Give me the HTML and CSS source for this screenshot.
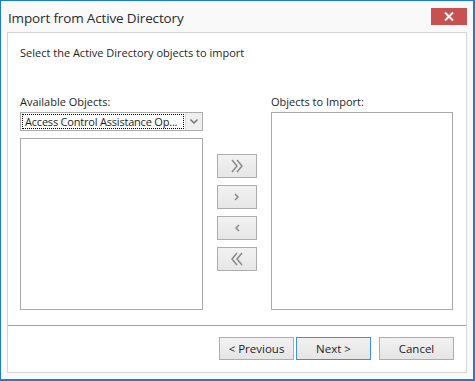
FILE: index.html
```html
<!DOCTYPE html>
<html lang="en">
<head>
    <meta charset="UTF-8">
    <title>Import from Active Directory</title>
    <link rel="stylesheet" href="styles.css">
</head>
<body>
    <div class="window">
        <div class="title-bar">
            <span class="title">Import from Active Directory</span>
            <button class="close-button" aria-label="Close">
                <svg width="10" height="9" viewBox="0 0 10 9"><path d="M1 0.5 L9 8.5 M9 0.5 L1 8.5" stroke="#fff" stroke-width="2"/></svg>
            </button>
        </div>
        <div class="panel">
            <div class="panel-body">
                <p class="intro">Select the Active Directory objects to import</p>
                <div class="columns">
                    <div class="column left">
                        <label class="field-label">Available Objects:</label>
                        <div class="combo">
                            <span class="combo-text">Access Control Assistance Op...</span>
                            <span class="combo-button">
                                <svg width="8" height="5" viewBox="0 0 8 5"><path d="M0.5 0.5 L4 4 L7.5 0.5" fill="none" stroke="#6d6d6d" stroke-width="1.4"/></svg>
                            </span>
                        </div>
                        <div class="list-box available"></div>
                    </div>
                    <div class="column middle">
                        <button class="move-button" aria-label="Add all">
                            <svg width="12" height="14" viewBox="0 0 12 14"><path d="M1 1 L6 7 L1 13 M6 1 L11 7 L6 13" fill="none" stroke="#8a8a8a" stroke-width="1.5"/></svg>
                        </button>
                        <button class="move-button" aria-label="Add">
                            <svg width="6" height="8" viewBox="0 0 6 8"><path d="M1 1 L4 4 L1 7" fill="none" stroke="#8a8a8a" stroke-width="1.5"/></svg>
                        </button>
                        <button class="move-button" aria-label="Remove">
                            <svg width="6" height="8" viewBox="0 0 6 8"><path d="M5 1 L2 4 L5 7" fill="none" stroke="#8a8a8a" stroke-width="1.5"/></svg>
                        </button>
                        <button class="move-button" aria-label="Remove all">
                            <svg width="12" height="14" viewBox="0 0 12 14"><path d="M11 1 L6 7 L11 13 M6 1 L1 7 L6 13" fill="none" stroke="#8a8a8a" stroke-width="1.5"/></svg>
                        </button>
                    </div>
                    <div class="column right">
                        <label class="field-label">Objects to Import:</label>
                        <div class="list-box selected"></div>
                    </div>
                </div>
            </div>
            <div class="panel-footer">
                <button class="button">&lt; Previous</button>
                <button class="button default">Next &gt;</button>
                <button class="button cancel">Cancel</button>
            </div>
        </div>
    </div>
</body>
</html>
```

FILE: styles.css
```css
body {
    margin: 0;
    padding: 0;
    font-family: "Open Sans", "Noto Sans", Arial, sans-serif;
    font-size: 11px;
    color: #1e1e1e;
    background-color: #ffffff;
}
.window {
    width: 475px;
    height: 381px;
    box-sizing: border-box;
    border: 1px solid #1a7fd4;
    border-right-width: 2px;
    border-bottom-width: 2px;
    background-color: #f9f9f9;
    display: flex;
    flex-direction: column;
}
.title-bar {
    height: 31px;
    display: flex;
    justify-content: space-between;
    align-items: flex-start;
    flex-shrink: 0;
}
.title {
    font-size: 13.5px;
    letter-spacing: -0.15px;
    color: #2b2b2b;
    padding-left: 7px;
    line-height: 20px;
    margin-top: 7px;
}
.close-button {
    width: 36px;
    min-width: 36px;
    height: 17px;
    flex-shrink: 0;
    margin-top: 7px;
    margin-right: 6px;
    border: none;
    padding: 0;
    background-color: #c75050;
    display: flex;
    align-items: center;
    justify-content: center;
}
.panel {
    margin: 0 6px 6px 6px;
    flex: 1;
    background-color: #ffffff;
    border: 1px solid #d6d6d6;
    display: flex;
    flex-direction: column;
}
.panel-body {
    height: 292px;
    padding: 12px 13px 0 12px;
    box-sizing: border-box;
}
.intro {
    margin: 0;
    line-height: 16px;
}
.columns {
    display: flex;
    margin-top: 33px;
}
.column {
    display: flex;
    flex-direction: column;
}
.column.left {
    width: 183px;
}
.column.right {
    width: 182px;
}
.field-label {
    line-height: 16px;
    margin-bottom: 2px;
}
.combo {
    height: 19px;
    box-sizing: border-box;
    border: 1px solid #acacac;
    display: flex;
    background-color: #ffffff;
}
.combo-text {
    flex: 1;
    margin: 1px;
    border: 1px dotted #000;
    line-height: 13px;
    padding-left: 2px;
    white-space: nowrap;
    overflow: hidden;
    font-size: 11px;
    letter-spacing: -0.2px;
}
.combo-button {
    width: 16px;
    border-left: 1px solid #dcdcdc;
    background-color: #efefef;
    display: flex;
    align-items: center;
    justify-content: center;
}
.list-box {
    border: 1px solid #a9a9a9;
    box-sizing: border-box;
    background-color: #ffffff;
}
.list-box.available {
    margin-top: 7px;
    height: 172px;
}
.list-box.selected {
    height: 198px;
}
.column.middle {
    width: 68px;
    padding-top: 60px;
    padding-left: 14px;
    box-sizing: border-box;
    gap: 7px;
}
.move-button {
    width: 40px;
    height: 24px;
    padding: 0;
    border: 1px solid #adadad;
    background: linear-gradient(#f2f2f2, #e6e6e6);
    display: flex;
    align-items: center;
    justify-content: center;
}
.panel-footer {
    flex: 1;
    border-top: 1px solid #a0a0a0;
    display: flex;
    justify-content: flex-end;
    align-items: flex-start;
    padding: 11px 12px 0 0;
}
.button {
    width: 75px;
    height: 23px;
    padding: 0;
    font-family: inherit;
    font-size: 11.5px;
    color: #1e1e1e;
    border: 1px solid #adadad;
    background: linear-gradient(#f2f2f2, #e5e5e5);
}
.button.default {
    margin-left: 2px;
    border-color: #3d8ee6;
    background: linear-gradient(#f0f0f0, #e5e5e5);
}
.button.cancel {
    margin-left: 8px;
}
```
